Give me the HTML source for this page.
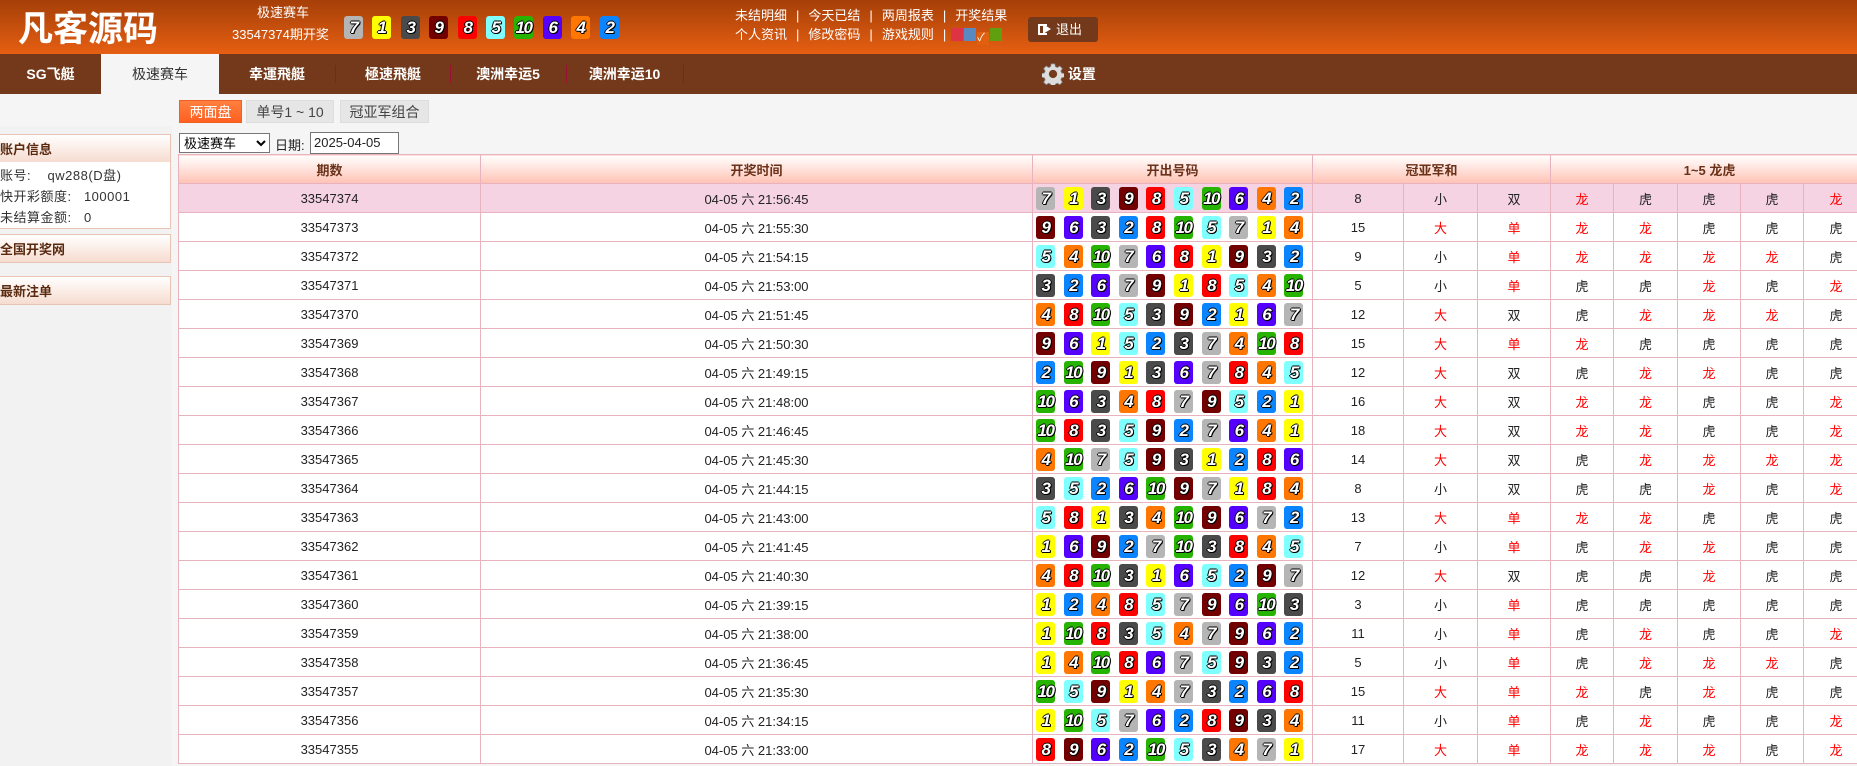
<!DOCTYPE html>
<html><head><meta charset="utf-8"><style>
*{margin:0;padding:0;box-sizing:border-box}
body{width:1857px;height:766px;overflow:hidden;background:#f5f5f5;font-family:"Liberation Sans","Noto Sans CJK SC",sans-serif;font-size:13px;color:#222;position:relative}
.hd{position:absolute;left:0;top:0;width:1857px;height:54px;background:linear-gradient(#a53f08,#e65f12)}
.logo{position:absolute;left:18px;top:7px;color:#fff;font-size:35px;font-weight:bold;letter-spacing:0px;font-family:"Noto Sans CJK SC",sans-serif;line-height:40px}
.ht{position:absolute;color:#fff;font-size:13px;line-height:16px}
.b{display:inline-block;width:19px;height:23px;border-radius:3px;color:#fff;font-weight:bold;font-style:italic;font-size:17px;line-height:23px;text-align:center;text-shadow:-1px 0 #000,1px 0 #000,0 -1px #000,0 1px #000,1px 1px #000;letter-spacing:-1.5px;font-family:"Liberation Sans",sans-serif;vertical-align:middle}
.c1{background:#ffff00}.c2{background:#0a84ff}.c3{background:#4a4a4a}.c4{background:#ff7700}.c5{background:#80ffff}.c6{background:#5500ff}.c7{background:#b5b5b5}.c8{background:#ff0000}.c9{background:#730000}.c10{background:#26b400}
.hb{position:absolute;top:16px}
.hb .b{position:absolute}
.lk{position:absolute;left:735px;color:#fff;font-size:13px;line-height:16px;white-space:nowrap}
.lk span{margin:0 9px;color:#fff}
.exit{position:absolute;left:1028px;top:17px;width:70px;height:25px;background:#73391a;border-radius:3px;color:#fff;font-size:13px;line-height:25px;padding-left:28px}
.exit:before{content:"";position:absolute;left:10px;top:7px;width:9px;height:11px;border:2px solid #fff;border-right:none;box-sizing:border-box}
.exit:after{content:"";position:absolute;left:15px;top:7px;border-left:8px solid #fff;border-top:5.5px solid transparent;border-bottom:5.5px solid transparent}
.nav{position:absolute;left:0;top:54px;width:1857px;height:40px;background:#73391a}
.nav div{position:absolute;top:0;height:40px;line-height:40px;text-align:center;color:#fff;font-weight:bold;font-size:14px}
.nav .sep{width:1px;height:18px;top:11px;background:#9a1030}
.nav .act{background:#f5f5f5;color:#333;font-weight:normal}
.st{position:absolute;top:100px;height:23px;line-height:23px;text-align:center;font-size:14px;background:#e6e6e6;color:#444;border:1px solid #ddd}
.side{position:absolute;left:0;top:126px;width:172px;height:640px;background:#f2f2f2}
.ph{position:absolute;left:0;width:171px;height:29px;line-height:29px;font-weight:bold;color:#5a2a10;background:linear-gradient(#fff,#f6dccf);border:1px solid #e8c4b4;border-left:none;font-size:13px}
.pb{position:absolute;left:0;width:171px;height:67px;background:#fff;border:1px solid #e8c4b4;border-top:none;border-left:none;font-size:13px;color:#333;line-height:21px;padding-top:3px;letter-spacing:0.5px}
select{position:absolute;left:179px;top:133px;width:91px;height:20px;font-size:13px;font-family:inherit;border:1px solid #777;background:#fff}
.dt{position:absolute;left:275px;top:135px;font-size:13px}
.inp{position:absolute;left:310px;top:132px;width:89px;height:22px;border:1px solid #777;background:#fff;font-size:13px;line-height:20px;padding-left:3px}
table{position:absolute;left:178px;top:154px;border-collapse:collapse;table-layout:fixed;width:1690px;background:#fff}
td,th{border:1px solid #e6b3bf;height:29px;text-align:center;font-weight:normal;font-size:13px;color:#222;padding:0}
th{background:linear-gradient(#fff,#ffc2b4);color:#6b3118;font-weight:bold;height:29px}
tr.f td{background:#f5d3e3}
.r{color:#f00}
.bl{display:flex;justify-content:flex-start;padding-left:3px}
.bl i{display:block;width:28px;font-style:normal;text-align:left;line-height:23px}
</style></head><body>
<div class="hd">
<div class="logo">凡客源码</div>
<div class="ht" style="left:257px;top:5px">极速赛车</div>
<div class="ht" style="left:232px;top:27px">33547374期开奖</div>
<div class="hb">
<span class="b c7" style="left:344px">7</span><span class="b c1" style="left:372px">1</span><span class="b c3" style="left:401px">3</span><span class="b c9" style="left:429px">9</span><span class="b c8" style="left:458px">8</span><span class="b c5" style="left:486px">5</span><span class="b c10" style="left:514px">10</span><span class="b c6" style="left:543px">6</span><span class="b c4" style="left:571px">4</span><span class="b c2" style="left:600px">2</span>
</div>
<div class="lk" style="top:8px">未结明细<span>|</span>今天已结<span>|</span>两周报表<span>|</span>开奖结果</div>
<div class="lk" style="top:27px">个人资讯<span>|</span>修改密码<span>|</span>游戏规则<span>|</span><i style="display:inline-block;width:12px;height:13px;background:#dd3344;vertical-align:-2px;margin-left:-4px"></i><i style="display:inline-block;width:12px;height:13px;background:#5a88c0;vertical-align:-2px;margin-left:1px"></i><i style="display:inline-block;width:12px;height:13px;background:#e06010;vertical-align:-2px;margin-left:1px;font-style:normal;font-size:11px;line-height:13px">✓</i><i style="display:inline-block;width:12px;height:13px;background:#60a010;vertical-align:-2px;margin-left:1px"></i></div>
<div class="exit">退出</div>
</div>
<div class="nav">
<div style="left:0;width:101px">SG飞艇</div>
<div class="act" style="left:101px;width:118px">极速赛车</div>
<div style="left:219px;width:116px">幸運飛艇</div>
<div class="sep" style="left:335px"></div>
<div style="left:335px;width:116px">極速飛艇</div>
<div class="sep" style="left:450px"></div>
<div style="left:450px;width:116px">澳洲幸运5</div>
<div class="sep" style="left:566px"></div>
<div style="left:566px;width:117px">澳洲幸运10</div>
<div class="sep" style="left:683px"></div>
<div style="left:1042px;width:60px;text-align:left"><svg width="22" height="22" viewBox="0 0 24 24" style="vertical-align:-6px"><path fill="#ddd" stroke="#888" stroke-width="0.8" d="M10 1h4l.6 3 2.2 1 2.6-1.7 2.8 2.8-1.7 2.6 1 2.2 3 .6v4l-3 .6-1 2.2 1.7 2.6-2.8 2.8-2.6-1.7-2.2 1-.6 3h-4l-.6-3-2.2-1-2.6 1.7-2.8-2.8 1.7-2.6-1-2.2-3-.6v-4l3-.6 1-2.2-1.7-2.6 2.8-2.8 2.6 1.7 2.2-1z"/><circle cx="12" cy="12" r="4.5" fill="#73391a"/></svg> 设置</div>
</div>
<div class="st" style="left:179px;width:63px;color:#fff;border-color:#f06020;background:linear-gradient(#ff8040,#ff6020)">两面盘</div>
<div class="st" style="left:246px;width:88px">单号1 ~ 10</div>
<div class="st" style="left:340px;width:89px">冠亚军组合</div>
<div class="side">
<div class="ph" style="top:8px">账户信息</div>
<div class="pb" style="top:36px">账号:&nbsp;&nbsp;&nbsp;&nbsp;qw288(D盘)<br>快开彩额度:&nbsp;&nbsp;&nbsp;100001<br>未结算金额:&nbsp;&nbsp;&nbsp;0</div>
<div class="ph" style="top:108px">全国开奖网</div>
<div class="ph" style="top:150px">最新注单</div>
</div>
<select><option>极速赛车</option></select>
<div class="dt">日期:</div>
<div class="inp">2025-04-05</div>
<table>
<colgroup><col style="width:302px"><col style="width:552px"><col style="width:280px"><col style="width:91px"><col style="width:74px"><col style="width:73px"><col style="width:63px"><col style="width:64px"><col style="width:63px"><col style="width:63px"><col style="width:65px"></colgroup>
<tr><th>期数</th><th>开奖时间</th><th>开出号码</th><th colspan="3">冠亚军和</th><th colspan="5">1~5 龙虎</th></tr>
<tbody id="tb"></tbody>
</table>
<script>
var D=[
["33547374","21:56:45","7 1 3 9 8 5 10 6 4 2","8","小","双","龙虎虎虎龙"],
["33547373","21:55:30","9 6 3 2 8 10 5 7 1 4","15","大","单","龙龙虎虎虎"],
["33547372","21:54:15","5 4 10 7 6 8 1 9 3 2","9","小","单","龙龙龙龙虎"],
["33547371","21:53:00","3 2 6 7 9 1 8 5 4 10","5","小","单","虎虎龙虎龙"],
["33547370","21:51:45","4 8 10 5 3 9 2 1 6 7","12","大","双","虎龙龙龙虎"],
["33547369","21:50:30","9 6 1 5 2 3 7 4 10 8","15","大","单","龙虎虎虎虎"],
["33547368","21:49:15","2 10 9 1 3 6 7 8 4 5","12","大","双","虎龙龙虎虎"],
["33547367","21:48:00","10 6 3 4 8 7 9 5 2 1","16","大","双","龙龙虎虎龙"],
["33547366","21:46:45","10 8 3 5 9 2 7 6 4 1","18","大","双","龙龙虎虎龙"],
["33547365","21:45:30","4 10 7 5 9 3 1 2 8 6","14","大","双","虎龙龙龙龙"],
["33547364","21:44:15","3 5 2 6 10 9 7 1 8 4","8","小","双","虎虎龙虎龙"],
["33547363","21:43:00","5 8 1 3 4 10 9 6 7 2","13","大","单","龙龙虎虎虎"],
["33547362","21:41:45","1 6 9 2 7 10 3 8 4 5","7","小","单","虎龙龙虎虎"],
["33547361","21:40:30","4 8 10 3 1 6 5 2 9 7","12","大","双","虎虎龙虎虎"],
["33547360","21:39:15","1 2 4 8 5 7 9 6 10 3","3","小","单","虎虎虎虎虎"],
["33547359","21:38:00","1 10 8 3 5 4 7 9 6 2","11","小","单","虎龙虎虎龙"],
["33547358","21:36:45","1 4 10 8 6 7 5 9 3 2","5","小","单","虎龙龙龙虎"],
["33547357","21:35:30","10 5 9 1 4 7 3 2 6 8","15","大","单","龙虎龙虎虎"],
["33547356","21:34:15","1 10 5 7 6 2 8 9 3 4","11","小","单","虎龙虎虎龙"],
["33547355","21:33:00","8 9 6 2 10 5 3 4 7 1","17","大","单","龙龙龙虎龙"]];
var h="";
D.forEach(function(r,i){
h+='<tr'+(i==0?' class="f"':'')+'><td>'+r[0]+'</td><td>04-05 六 '+r[1]+'</td><td><div class="bl">';
r[2].split(" ").forEach(function(n){h+='<i><span class="b c'+n+'">'+n+'</span></i>'});
h+='</div></td><td>'+r[3]+'</td><td'+(r[4]=="大"?' class="r"':'')+'>'+r[4]+'</td><td'+(r[5]=="单"?' class="r"':'')+'>'+r[5]+'</td>';
r[6].split("").forEach(function(c){h+='<td'+(c=="龙"?' class="r"':'')+'>'+c+'</td>'});
h+='</tr>';});
document.getElementById("tb").innerHTML=h;
</script>
</body></html>
